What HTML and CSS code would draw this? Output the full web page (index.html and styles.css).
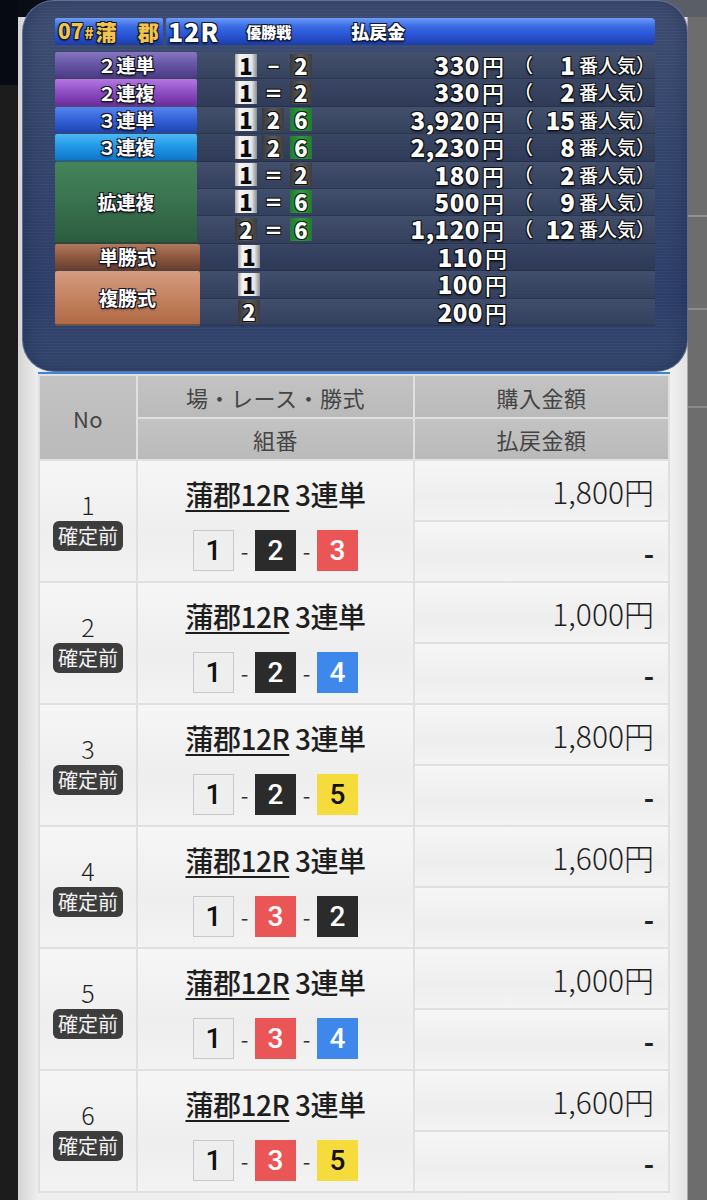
FILE: index.html
```html
<!DOCTYPE html>
<html lang="ja">
<head>
<meta charset="utf-8">
<title>払戻金</title>
<link rel="stylesheet" href="styles.css">
</head>
<body>
<div class="page">
  <section class="board">
    <div class="board-head">
      <div class="head-venue"><span class="jcd">07<small>#</small></span><span class="venue">蒲　郡</span></div>
      <div class="head-race"><span class="rno">12R</span><span class="rname">優勝戦</span><span class="paylabel">払戻金</span></div>
    </div>
    <div class="pay-groups">
      <div class="pay-group">
        <div class="pay-label l-2t">２連単</div>
        <div class="pay-lines">
          <div class="pay-line">
            <div class="combo"><span class="bx bw">1</span><span class="sep">−</span><span class="bx bk">2</span></div>
            <div class="amt">330<span class="yen">円</span></div><div class="lp">（</div><div class="pop">1</div><div class="popt">番人気）</div>
          </div>
        </div>
      </div>
      <div class="pay-group">
        <div class="pay-label l-2f">２連複</div>
        <div class="pay-lines">
          <div class="pay-line alt">
            <div class="combo"><span class="bx bw">1</span><span class="sep">＝</span><span class="bx bk">2</span></div>
            <div class="amt">330<span class="yen">円</span></div><div class="lp">（</div><div class="pop">2</div><div class="popt">番人気）</div>
          </div>
        </div>
      </div>
      <div class="pay-group">
        <div class="pay-label l-3t">３連単</div>
        <div class="pay-lines">
          <div class="pay-line">
            <div class="combo"><span class="bx bw">1</span><span class="bx bk">2</span><span class="bx bg">6</span></div>
            <div class="amt">3,920<span class="yen">円</span></div><div class="lp">（</div><div class="pop">15</div><div class="popt">番人気）</div>
          </div>
        </div>
      </div>
      <div class="pay-group">
        <div class="pay-label l-3f">３連複</div>
        <div class="pay-lines">
          <div class="pay-line alt">
            <div class="combo"><span class="bx bw">1</span><span class="bx bk">2</span><span class="bx bg">6</span></div>
            <div class="amt">2,230<span class="yen">円</span></div><div class="lp">（</div><div class="pop">8</div><div class="popt">番人気）</div>
          </div>
        </div>
      </div>
      <div class="pay-group">
        <div class="pay-label l-kf">拡連複</div>
        <div class="pay-lines">
          <div class="pay-line">
            <div class="combo"><span class="bx bw">1</span><span class="sep">＝</span><span class="bx bk">2</span></div>
            <div class="amt">180<span class="yen">円</span></div><div class="lp">（</div><div class="pop">2</div><div class="popt">番人気）</div>
          </div>
          <div class="pay-line">
            <div class="combo"><span class="bx bw">1</span><span class="sep">＝</span><span class="bx bg">6</span></div>
            <div class="amt">500<span class="yen">円</span></div><div class="lp">（</div><div class="pop">9</div><div class="popt">番人気）</div>
          </div>
          <div class="pay-line">
            <div class="combo"><span class="bx bk">2</span><span class="sep">＝</span><span class="bx bg">6</span></div>
            <div class="amt">1,120<span class="yen">円</span></div><div class="lp">（</div><div class="pop">12</div><div class="popt">番人気）</div>
          </div>
        </div>
      </div>
      <div class="pay-group">
        <div class="pay-label l-tan">単勝式</div>
        <div class="pay-lines">
          <div class="pay-line alt">
            <div class="combo"><span class="bx bw">1</span></div>
            <div class="amt">110<span class="yen">円</span></div>
          </div>
        </div>
      </div>
      <div class="pay-group">
        <div class="pay-label l-fuku">複勝式</div>
        <div class="pay-lines">
          <div class="pay-line">
            <div class="combo"><span class="bx bw">1</span></div>
            <div class="amt">100<span class="yen">円</span></div>
          </div>
          <div class="pay-line">
            <div class="combo"><span class="bx bk">2</span></div>
            <div class="amt">200<span class="yen">円</span></div>
          </div>
        </div>
      </div>
    </div>
  </section>

  <section class="sheet">
    <div class="th th-no">No</div>
    <div class="th">場・レース・勝式</div>
    <div class="th">購入金額</div>
    <div class="th">組番</div>
    <div class="th">払戻金額</div>

    <div class="td td-no"><span class="num">1</span><span class="badge">確定前</span></div>
    <div class="td td-bet"><div class="bet-title"><u>蒲郡12R</u> 3連単</div><div class="boxes"><span class="wk w1">1</span><span class="dash">-</span><span class="wk w2">2</span><span class="dash">-</span><span class="wk w3">3</span></div></div>
    <div class="td td-amt">1,800円</div>
    <div class="td td-pay">-</div>

    <div class="td td-no"><span class="num">2</span><span class="badge">確定前</span></div>
    <div class="td td-bet"><div class="bet-title"><u>蒲郡12R</u> 3連単</div><div class="boxes"><span class="wk w1">1</span><span class="dash">-</span><span class="wk w2">2</span><span class="dash">-</span><span class="wk w4">4</span></div></div>
    <div class="td td-amt">1,000円</div>
    <div class="td td-pay">-</div>

    <div class="td td-no"><span class="num">3</span><span class="badge">確定前</span></div>
    <div class="td td-bet"><div class="bet-title"><u>蒲郡12R</u> 3連単</div><div class="boxes"><span class="wk w1">1</span><span class="dash">-</span><span class="wk w2">2</span><span class="dash">-</span><span class="wk w5">5</span></div></div>
    <div class="td td-amt">1,800円</div>
    <div class="td td-pay">-</div>

    <div class="td td-no"><span class="num">4</span><span class="badge">確定前</span></div>
    <div class="td td-bet"><div class="bet-title"><u>蒲郡12R</u> 3連単</div><div class="boxes"><span class="wk w1">1</span><span class="dash">-</span><span class="wk w3">3</span><span class="dash">-</span><span class="wk w2">2</span></div></div>
    <div class="td td-amt">1,600円</div>
    <div class="td td-pay">-</div>

    <div class="td td-no"><span class="num">5</span><span class="badge">確定前</span></div>
    <div class="td td-bet"><div class="bet-title"><u>蒲郡12R</u> 3連単</div><div class="boxes"><span class="wk w1">1</span><span class="dash">-</span><span class="wk w3">3</span><span class="dash">-</span><span class="wk w4">4</span></div></div>
    <div class="td td-amt">1,000円</div>
    <div class="td td-pay">-</div>

    <div class="td td-no"><span class="num">6</span><span class="badge">確定前</span></div>
    <div class="td td-bet"><div class="bet-title"><u>蒲郡12R</u> 3連単</div><div class="boxes"><span class="wk w1">1</span><span class="dash">-</span><span class="wk w3">3</span><span class="dash">-</span><span class="wk w5">5</span></div></div>
    <div class="td td-amt">1,600円</div>
    <div class="td td-pay">-</div>
  </section>
</div>
</body>
</html>
```

FILE: styles.css
```css
* { box-sizing: border-box; }
html, body { margin: 0; padding: 0; }
body {
  width: 707px;
  height: 1200px;
  overflow: hidden;
  font-family: "Noto Sans CJK JP", "Noto Sans", sans-serif;
  background:
    linear-gradient(#060a12, #060a12) 0 0 / 18px 85px no-repeat,
    linear-gradient(to right, #080c16 0, #0a0f18 340px, #5a5e66 640px) 0 0 / 707px 17px no-repeat,
    linear-gradient(rgba(255,255,255,0.25), rgba(255,255,255,0.25)) 688px 215px / 19px 2px no-repeat,
    linear-gradient(rgba(255,255,255,0.2), rgba(255,255,255,0.2)) 688px 308px / 19px 2px no-repeat,
    linear-gradient(rgba(255,255,255,0.2), rgba(255,255,255,0.2)) 688px 406px / 19px 2px no-repeat,
    linear-gradient(to right, #1c1c1c 0 18px, #d4d4d4 18px, #eeeeee 38px, #f1f1f1 670px, #e2e2e2 687px, #6d6d6d 688px);
}

.page { width: 707px; }

/* ---------- payout board ---------- */
.board {
  margin-left: 22px;
  width: 666px;
  height: 372px;
  padding: 17px 32px 0;
  border-radius: 32px;
  border: 1px solid rgba(140, 160, 205, 0.45);
  background:
    repeating-linear-gradient(0deg, rgba(255,255,255,0.025) 0 1px, rgba(0,0,0,0.02) 1px 3px),
    linear-gradient(180deg, #3f4e73 0%, #36476e 35%, #2e3f6b 80%, #36486f 100%);
  box-shadow: inset 0 0 18px rgba(10, 20, 45, 0.35);
  font-family: "Noto Sans CJK JP", sans-serif;
  color: #fff;
}

.board-head {
  display: flex;
  height: 27px;
  margin-bottom: 7px;
}
.head-venue, .head-race {
  display: flex;
  align-items: center;
  height: 27px;
  background: linear-gradient(180deg, #6e9df6 0%, #3c6ce6 30%, #2853d3 65%, #1d3ea8 100%);
  border-radius: 2px;
}
.head-venue { width: 108px; padding-left: 3px; }
.head-race { flex: 1; margin-left: 3px; padding-left: 2px; border-radius: 2px 4px 4px 2px; }

.jcd, .venue, .rno, .rname, .paylabel {
  font-weight: 900;
  text-shadow: -1px -1px 0 #121a2e, 1px -1px 0 #121a2e, -1px 1px 0 #121a2e, 1px 1px 0 #121a2e, 0 2px 2px rgba(0,0,0,0.6);
  line-height: 27px;
}
.jcd { color: #f3c44a; font-size: 21px; letter-spacing: 0; }
.jcd small { font-size: 15px; margin-left: 1px; }
.venue { color: #f3c44a; font-size: 21px; margin-left: 2px; }
.rno { font-size: 25px; letter-spacing: 1px; }
.rname { font-size: 15px; margin-left: 27px; }
.paylabel { font-size: 18px; margin-left: 60px; }

.pay-groups { display: flex; flex-direction: column; }
.pay-group { display: flex; }
.pay-label {
  width: 145px;
  display: flex;
  align-items: center;
  justify-content: center;
  font-size: 19px;
  line-height: 1;
  font-weight: 700;
  color: #fff;
  text-shadow: -1px -1px 0 #15151f, 1px -1px 0 #15151f, -1px 1px 0 #15151f, 1px 1px 0 #15151f, 0 2px 2px rgba(0,0,0,0.5);
  border-bottom: 2px solid rgba(20, 22, 35, 0.55);
  border-radius: 2px;
}
.l-2t { background: linear-gradient(180deg, #8676c2 0%, #6858a6 45%, #4c3d8a 100%); }
.l-2f { background: linear-gradient(180deg, #b478e0 0%, #9152c6 45%, #6e2ea0 100%); }
.l-3t { background: linear-gradient(180deg, #5586ee 0%, #3665dc 45%, #1f45b4 100%); }
.l-3f { background: linear-gradient(180deg, #4cb8f4 0%, #229ae8 45%, #0f76c8 100%); }
.l-kf { background: linear-gradient(180deg, #44845a 0%, #3a7450 45%, #2c5c3e 100%); }
.l-tan { background: linear-gradient(180deg, #b27a5e 0%, #8e5a40 50%, #6a4030 100%); }
.l-fuku { background: linear-gradient(180deg, #d49c80 0%, #c48260 50%, #b06a44 100%); }

.pay-lines { flex: 1; display: flex; flex-direction: column; }
.pay-line {
  height: 27.4px;
  display: grid;
  grid-template-columns: 125px 182px 33px 38px 1fr;
  grid-template-rows: 26px;
  align-items: center;
  background: linear-gradient(180deg, rgba(70, 82, 108, 0.75), rgba(52, 63, 88, 0.75));
  border-bottom: 1px solid rgba(22, 30, 48, 0.5);
}
.pay-line.alt { background: linear-gradient(180deg, rgba(58, 70, 96, 0.75), rgba(44, 54, 80, 0.75)); }

.combo {
  padding-left: 38px;
  display: grid;
  grid-template-columns: 22px 33px 22px;
  align-items: center;
  justify-items: center;
}
.bx {
  display: block;
  height: 23px;
  line-height: 23px;
  font-size: 22px;
  font-weight: 900;
  text-align: center;
  font-family: "Noto Sans CJK JP", sans-serif;
}
.bw {
  width: 22px;
  color: #0a0a0a;
  background: linear-gradient(90deg, #a8a8a8 0%, #f4f4f4 20%, #e6e6e6 75%, #8c8c8c 100%);
}
.bk {
  width: 22px;
  color: #fff;
  background: linear-gradient(90deg, #3a3a3a, #5a5a5a 50%, #3e3e3e);
  text-shadow: -1px -1px 0 #111, 1px -1px 0 #111, -1px 1px 0 #111, 1px 1px 0 #111;
}
.bg {
  width: 22px;
  color: #fff;
  background: linear-gradient(90deg, #237a32, #2f9a40 50%, #237a32);
  text-shadow: -1px -1px 0 #0c2a10, 1px -1px 0 #0c2a10, -1px 1px 0 #0c2a10, 1px 1px 0 #0c2a10;
}
.sep {
  font-size: 19px;
  line-height: 23px;
  font-weight: 900;
  color: #fff;
  text-shadow: -1px -1px 0 #111, 1px -1px 0 #111, -1px 1px 0 #111, 1px 1px 0 #111;
}

.amt, .lp, .pop, .popt {
  color: #fff;
  font-weight: 900;
  line-height: 26px;
  text-shadow: -1px -1px 0 #111, 1px -1px 0 #111, -1px 1px 0 #111, 1px 1px 0 #111, 0 2px 2px rgba(0,0,0,0.6);
  white-space: nowrap;
}
.amt { text-align: right; font-size: 24px; letter-spacing: 0.5px; }
.yen { font-size: 22px; font-weight: 500; margin-left: 2px; letter-spacing: 0; }
.lp { font-size: 19px; font-weight: 500; text-align: center; padding-left: 6px; }
.pop { text-align: right; font-size: 24px; }
.popt { font-size: 19px; font-weight: 500; padding-left: 4px; }

/* ---------- bet sheet ---------- */
.sheet {
  margin-left: 38px;
  width: 632px;
  border-top: 2px solid #3b86d6;
  padding: 2px;
  display: grid;
  grid-template-columns: 96px 275px 253px;
  grid-auto-rows: 59px;
  grid-template-rows: 41px 40px;
  gap: 2px;
  background: #e0e0e0;
}
.th {
  display: flex;
  align-items: center;
  justify-content: center;
  background: linear-gradient(180deg, #c3c3c3, #bababa);
  color: #454545;
  font-size: 22px;
  letter-spacing: 0.5px;
}
.th-no { grid-row: span 2; font-size: 22px; }

.td {
  background: linear-gradient(180deg, #f6f6f6 0%, #eeeeee 60%, #f3f3f3 100%);
  color: #222;
}
.td-no {
  grid-row: span 2;
  display: flex;
  flex-direction: column;
  align-items: center;
  justify-content: center;
  padding-bottom: 2px;
}
.num { font-size: 25px; font-weight: 300; line-height: 30px; }
.badge {
  margin-top: 2px;
  background: #3d3d3d;
  color: #f2f2f2;
  font-size: 20px;
  line-height: 30px;
  padding: 0 5px;
  border-radius: 6px;
}
.td-bet {
  grid-row: span 2;
  display: flex;
  flex-direction: column;
  align-items: center;
  justify-content: center;
  gap: 18px;
  padding-top: 4px;
}
.bet-title {
  font-size: 28px;
  font-weight: 500;
  line-height: 36px;
  color: #1e1e1e;
  letter-spacing: -0.5px;
}
.bet-title u {
  text-decoration-thickness: 2px;
  text-underline-offset: 4px;
}
.boxes { display: flex; align-items: center; }
.wk {
  width: 41px;
  height: 41px;
  display: flex;
  align-items: center;
  justify-content: center;
  font-family: Roboto, "Noto Sans", sans-serif;
  font-size: 28px;
  font-weight: 500;
}
.w1 { background: #eeeeee; border: 1px solid #c8c8c8; color: #111; }
.w2 { background: #2b2b2b; color: #fff; }
.w3 { background: #ea5656; color: #fff; }
.w4 { background: #3d88ea; color: #fff; }
.w5 { background: #f5dc3c; color: #111; }
.dash { width: 21px; text-align: center; font-size: 22px; color: #333; }

.td-amt, .td-pay {
  display: flex;
  align-items: center;
  justify-content: flex-end;
  padding-right: 14px;
}
.td-amt { font-size: 30px; font-weight: 300; color: #1e1e1e; }
.td-pay { font-size: 28px; font-weight: 700; padding-top: 2px; }
```
